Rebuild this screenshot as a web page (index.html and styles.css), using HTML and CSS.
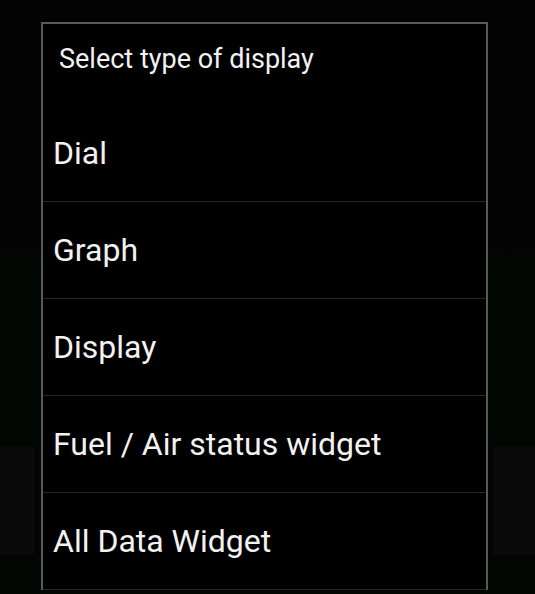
FILE: index.html
```html
<!DOCTYPE html>
<html lang="en">
<head>
    <meta charset="UTF-8">
    <meta name="viewport" content="width=device-width, initial-scale=1.0">
    <title>Select type of display</title>
    <link rel="stylesheet" href="styles.css">
</head>
<body>
    <div class="dialog">
        <div class="dialog-title">Select type of display</div>
        <ul class="options">
            <li class="option">Dial</li>
            <li class="option">Graph</li>
            <li class="option">Display</li>
            <li class="option">Fuel / Air status widget</li>
            <li class="option">All Data Widget</li>
        </ul>
    </div>
</body>
</html>
```

FILE: styles.css
```css
html, body {
    margin: 0;
    height: 100%;
}
body {
    font-family: Roboto, "Noto Sans", sans-serif;
    color: #f2f2f0;
    overflow: hidden;
    background:
        linear-gradient(#0b0a0b, #0b0a0b) 0 447px / 34px 108px no-repeat,
        linear-gradient(#0b0a0b, #0b0a0b) 493px 447px / 42px 108px no-repeat,
        linear-gradient(#030303 0, #030303 250px, #020602 260px, #020602 447px, #020502 555px, #020502 100%);
    padding: 22px 0 0 41px;
    box-sizing: border-box;
}
.dialog {
    width: 447px;
    background-color: #000;
    border: 2px solid #575a55;
    border-bottom: none;
    box-sizing: border-box;
}
.dialog-title {
    height: 81px;
    padding: 19px 0 0 16px;
    box-sizing: border-box;
    font-size: 27px;
    line-height: 32px;
}
.options {
    list-style: none;
    margin: 0;
    padding: 0;
}
.option {
    height: 97px;
    padding-left: 10px;
    box-sizing: border-box;
    border-bottom: 1px solid #262626;
    display: flex;
    align-items: center;
    font-size: 32px;
}
```
